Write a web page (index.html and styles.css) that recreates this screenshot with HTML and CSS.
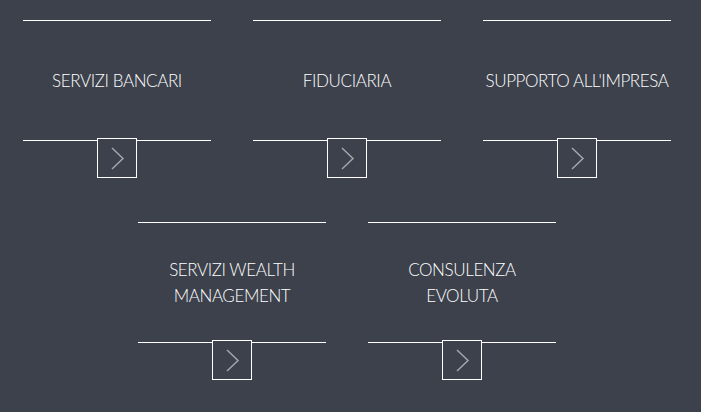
FILE: index.html
```html
<!DOCTYPE html>
<html lang="it">
<head>
<meta charset="utf-8">
<title>Servizi</title>
<link rel="stylesheet" href="styles.css">
</head>
<body>
<div class="grid">
  <a class="card" href="#">
    <div class="card-body"><span class="label">SERVIZI BANCARI</span></div>
    <span class="arrow"><svg width="38" height="38" viewBox="0 0 38 38"><polyline points="14,9 25,19.5 14,30" /></svg></span>
  </a>
  <a class="card" href="#">
    <div class="card-body"><span class="label">FIDUCIARIA</span></div>
    <span class="arrow"><svg width="38" height="38" viewBox="0 0 38 38"><polyline points="14,9 25,19.5 14,30" /></svg></span>
  </a>
  <a class="card" href="#">
    <div class="card-body"><span class="label">SUPPORTO ALL'IMPRESA</span></div>
    <span class="arrow"><svg width="38" height="38" viewBox="0 0 38 38"><polyline points="14,9 25,19.5 14,30" /></svg></span>
  </a>
  <a class="card" href="#">
    <div class="card-body"><span class="label">SERVIZI WEALTH<br>MANAGEMENT</span></div>
    <span class="arrow"><svg width="38" height="38" viewBox="0 0 38 38"><polyline points="14,9 25,19.5 14,30" /></svg></span>
  </a>
  <a class="card" href="#">
    <div class="card-body"><span class="label">CONSULENZA<br>EVOLUTA</span></div>
    <span class="arrow"><svg width="38" height="38" viewBox="0 0 38 38"><polyline points="14,9 25,19.5 14,30" /></svg></span>
  </a>
</div>
</body>
</html>
```
FILE: styles.css
```css
html, body {
  margin: 0;
  padding: 0;
  background: #3c414c;
  width: 701px;
  height: 412px;
  overflow: hidden;
}
body {
  font-family: "Lato", "Liberation Sans", sans-serif;
  color: #ffffff;
}
.grid {
  box-sizing: border-box;
  width: 648px;
  margin-left: 23px;
  padding-top: 20px;
  display: flex;
  flex-wrap: wrap;
  justify-content: center;
  column-gap: 42px;
  row-gap: 44px;
}
.card {
  width: 188px;
  display: flex;
  flex-direction: column;
  align-items: center;
  text-decoration: none;
  color: inherit;
}
.card-body {
  box-sizing: border-box;
  width: 100%;
  height: 121px;
  border-top: 1px solid #ffffff;
  border-bottom: 1px solid #ffffff;
  display: flex;
  align-items: center;
  justify-content: center;
  text-align: center;
}
.label {
  font-size: 17px;
  font-weight: 300;
  letter-spacing: -0.4px;
  line-height: 25.5px;
  white-space: nowrap;
  color: #ffffff;
}
.arrow {
  box-sizing: border-box;
  width: 40px;
  height: 40px;
  margin-top: -3px;
  border: 1px solid #ffffff;
  background: #3c414c;
  display: block;
}
.arrow svg {
  display: block;
}
.arrow polyline {
  fill: none;
  stroke: #a3a6ac;
  stroke-width: 1.5;
}
```
